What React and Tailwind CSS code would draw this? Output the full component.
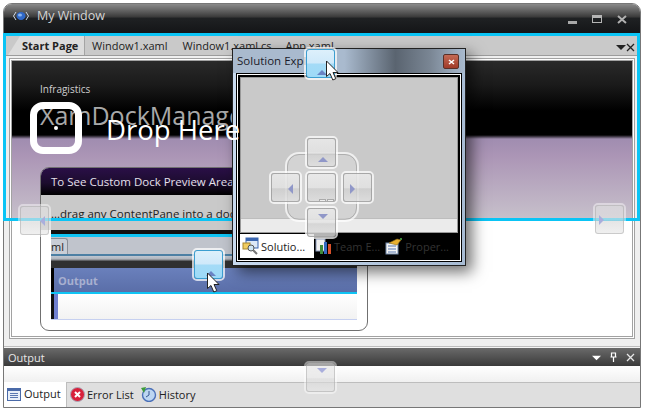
const font = { fontFamily: '"Open Sans","Noto Sans",sans-serif' };

function Cursor({ className }) {
  return (
    <svg className={className} width="15" height="22" viewBox="0 0 15 22">
      <path d="M1.5 1 L1.5 16.5 L5 13.5 L7.8 20 L10.8 18.7 L8 12.5 L13 12.5 Z" fill="#fff" stroke="#222" strokeWidth="1" />
    </svg>
  );
}

function Tri({ dir, color = "#8f94c4", size = 10 }) {
  const pts = { up: "0,8 5,3 10,8", down: "0,3 5,8 10,3", left: "7,0 7,10 2,5", right: "3,0 3,10 8,5" }[dir];
  return (
    <svg width={size} height={size} viewBox="0 0 10 10"><polygon points={pts} fill={color} /></svg>
  );
}

function DockBtn({ className = "", dir, active = false, faint = false, triClass = "" }) {
  const face = active
    ? "border-[#3c9ed0] bg-[linear-gradient(#ddf0fb_0%,#cfe9fa_48%,#a4dbf7_52%,#9ddaf7_100%)]"
    : faint
      ? "border-[#a8a8a880] bg-[linear-gradient(#e4e4e4a0_0%,#e4e4e4a0_50%,#d6d6d6a0_55%,#e6e6e6a0_100%)]"
      : "border-[#9a9a9acc] bg-[linear-gradient(#e9e9e9e0_0%,#e2e2e2e0_50%,#d0d0d0d0_55%,#e0e0e0d0_100%)]";
  return (
    <div className={`absolute w-[33px] h-[33px] rounded-[5px] border-2 ${faint ? "border-[#ffffff70]" : "border-[#ffffffb8]"} ${className}`}>
      <div className={`relative w-full h-full rounded-[3px] border ${face}`}>
        <div className={`absolute flex ${triClass}`}>
          <Tri dir={dir} color={active ? "#6a83c4" : faint ? "#a9aedc" : "#9097c8"} />
        </div>
      </div>
    </div>
  );
}

function SolIcon() {
  return (
    <svg width="18" height="18" viewBox="0 0 18 18" className="shrink-0">
      <rect x="4" y="1" width="12" height="10" fill="#dce8f6" stroke="#3a66b0" />
      <rect x="4" y="1" width="12" height="3" fill="#3a66b0" />
      <rect x="1" y="6" width="7" height="6" fill="#f0cc60" stroke="#a8862a" />
      <circle cx="9" cy="11" r="3" fill="#cfe6f5" stroke="#555" />
      <line x1="11" y1="13" x2="15" y2="17" stroke="#777" strokeWidth="2" />
    </svg>
  );
}

function TeamIcon() {
  return (
    <svg width="18" height="17" viewBox="0 0 18 17" className="shrink-0">
      <rect x="1" y="1" width="9" height="12" fill="#f0f0f0" stroke="#8898b8" />
      <rect x="5" y="7" width="3" height="9" fill="#3d8a3a" />
      <rect x="9" y="4" width="3" height="12" fill="#3468c0" />
      <rect x="13" y="6" width="3" height="10" fill="#d8502a" />
    </svg>
  );
}

function PropIcon() {
  return (
    <svg width="18" height="17" viewBox="0 0 18 17" className="shrink-0">
      <rect x="1" y="5" width="12" height="11" fill="#f4f4f4" stroke="#7088aa" />
      <path d="M3 8h8M3 11h8M3 14h8" stroke="#5878b0" />
      <path d="M4 5 L12 1 L16 2 L12 7 Z" fill="#e8b030" stroke="#8a6a18" strokeWidth="0.6" />
      <rect x="15" y="0" width="2" height="2" fill="#3d8a3a" />
    </svg>
  );
}

function OutputIcon() {
  return (
    <svg width="14" height="13" viewBox="0 0 14 13" className="shrink-0">
      <rect x="0.5" y="0.5" width="13" height="12" fill="#e8eff8" stroke="#4a6aa8" />
      <rect x="0.5" y="0.5" width="13" height="2.5" fill="#4a6aa8" />
      <path d="M3 5.5h8M3 7.5h8M3 9.5h8" stroke="#5a78b0" />
    </svg>
  );
}

function ErrIcon() {
  return (
    <svg width="15" height="15" viewBox="0 0 15 15" className="shrink-0">
      <circle cx="7.5" cy="7.5" r="7" fill="#d8203a" stroke="#a8a8b8" />
      <path d="M5 5l5 5M10 5l-5 5" stroke="#fff" strokeWidth="2" />
    </svg>
  );
}

function HistIcon() {
  return (
    <svg width="17" height="16" viewBox="0 0 17 16" className="shrink-0">
      <circle cx="9" cy="9" r="6.5" fill="#bcd6f2" stroke="#4a70b8" strokeWidth="1.4" />
      <path d="M9 5v4l-3 2" stroke="#35558f" fill="none" />
      <path d="M1 2 L6 1 L4 7 Z" fill="#3f9c3a" />
    </svg>
  );
}

export default function App() {
  return (
    <div className="relative w-[645px] h-[412px] overflow-hidden bg-white text-[11px] leading-none pl-[3px] pt-[3px]" style={font}>
      <div className="w-[638px] h-[405px] flex flex-col rounded-t-[9px] overflow-hidden border border-[#777] bg-[#f4f4f4]">
        {/* title bar */}
        <div className="h-[30px] shrink-0 flex items-center pl-[9px] pr-[13px] pb-[6px] bg-[linear-gradient(#8a8a8a_0%,#666_20%,#3c3c3c_42%,#1f2123_48%,#131416_100%)]">
          <svg width="16" height="12" viewBox="0 0 16 12" className="shrink-0">
            <path d="M3 2 L0.5 6 L3 10" stroke="#cfd8e6" fill="none" strokeWidth="1" />
            <path d="M13 2 L15.5 6 L13 10" stroke="#cfd8e6" fill="none" strokeWidth="1" />
            <ellipse cx="8" cy="6" rx="4.5" ry="4" fill="#2f68c8" />
            <ellipse cx="7" cy="5" rx="2" ry="1.5" fill="#8ab4ee" />
          </svg>
          <span className="ml-[8px] text-[12.5px] text-[#d4d4d4]">My Window</span>
          <div className="ml-auto flex items-center gap-[15px] mt-[6px]">
            <div className="w-[9px] h-[3px] mt-[7px] bg-[#a9a9a9]" />
            <div className="w-[10px] h-[8px] border border-t-[3px] border-[#b5b5b5]" />
            <svg width="10" height="9" viewBox="0 0 10 9"><path d="M1 1l8 7M9 1L1 8" stroke="#b0b0b0" strokeWidth="2" /></svg>
          </div>
        </div>

        {/* document area */}
        <div className="h-[313px] shrink-0 flex flex-col px-[5px] pb-[7px] bg-[#efefef] border-b border-[#bdbdbd]">
          <div className="h-[20px] shrink-0 -mx-[5px] mt-[2px] flex items-end pl-[4px] pr-[5px] bg-[#c9c9c9] border-b border-[#9c9c9c] text-[#222]">
            <div className="h-[19px] w-[77px] pl-[14px] flex items-center font-bold bg-[#dcdcdc] border-r border-[#a4a4a4] [clip-path:polygon(12px_0,100%_0,100%_100%,0_100%)]">Start Page</div>
            <div className="h-[19px] flex items-center ml-[7px]">Window1.xaml</div>
            <div className="h-[19px] flex items-center ml-[15px]">Window1.xaml.cs</div>
            <div className="h-[19px] flex items-center ml-[14px]">App.xaml</div>
            <div className="ml-auto flex items-center pb-[3px]">
              <Tri dir="down" color="#222" size={10} />
              <svg width="9" height="9" viewBox="0 0 9 9"><path d="M1 1l7 7M8 1L1 8" stroke="#222" strokeWidth="1.3" /></svg>
            </div>
          </div>
          <div className="flex-1 mt-[2px] border border-[#a2a2a2] p-[1px] bg-white">
            <div className="h-full border border-[#a2a2a2] pl-[28px] pt-[21px] bg-[linear-gradient(#2a2a2a_0px,#1a1a1a_24px,#000_50px,#000_74px,#a08db0_78px,#ac96b6_96px,#c8c2cc_160px,#fff_160px)]">
              <div className="text-[10px] text-[#cfcfcf] leading-[14px]">Infragistics</div>
              <div className="mt-[3px] text-[25px] leading-[32px] text-[#a8a8a8] whitespace-nowrap">XamDockManager</div>
              <div className="mt-[36px] w-[328px] h-[164px] rounded-[9px] border border-[#707070] bg-white overflow-hidden">
                <div className="h-[27px] pl-[10px] flex items-center text-[11.5px] text-[#e4e0ea] bg-[linear-gradient(#2a0f47_0%,#1c0c2e_55%,#000_100%)] whitespace-nowrap">To See Custom Dock Preview Areas</div>
                <div className="h-[35px] pl-[10px] pt-[13px] text-[11.5px] bg-[#c9c9c9] text-[#222] whitespace-nowrap">...drag any ContentPane into a document</div>
                <div className="mx-[10px] flex flex-col">
                  <div className="h-[7px] bg-[linear-gradient(#111_0%,#111_57%,#0fc4f4_57%,#0fc4f4_100%)]" />
                  <div className="h-[17px] bg-[#c0c4cc] flex items-end">
                    <div className="h-[16px] w-[17px] border border-b-0 border-l-0 border-[#8a8f98] rounded-tr-[3px] bg-[#c9ced6] text-[11px] text-[#222] flex items-center">ml</div>
                  </div>
                  <div className="h-[2px] bg-[#4d80a4]" />
                  <div className="h-[12px] bg-[linear-gradient(#c0c8d2_0%,#b0b4bc_25%,#303030_45%,#303030_100%)]" />
                  <div className="h-[24px] bg-[#000] pl-[3px]">
                    <div className="h-full pl-[4px] flex items-center font-bold text-[11px] text-[#a8b0d0] bg-[linear-gradient(#6a80bc,#5a6ea8)]">Output</div>
                  </div>
                  <div className="h-[2px] bg-[#0fc4f4]" />
                  <div className="h-[26px] bg-[#fafafa] border-b border-[#c6d0f0] flex">
                    <div className="w-[7px] bg-[linear-gradient(90deg,#111_0_3px,#7080d0_3px)]" />
                    <div className="flex-1 bg-[linear-gradient(#fff,#f2f2f2)]" />
                  </div>
                </div>
              </div>
            </div>
          </div>
        </div>

        {/* output pane */}
        <div className="h-[18px] mt-[1px] shrink-0 flex items-center pl-[4px] pr-[5px] bg-[linear-gradient(#6a6a6a,#3a3a3a)] text-[#e8e8e8]">
          Output
          <div className="ml-auto flex items-center gap-[9px]">
            <Tri dir="down" color="#fff" size={9} />
            <svg width="7" height="10" viewBox="0 0 7 10"><path d="M1.5 1h4v4h-4zM0.5 5h6M3.5 5v5" stroke="#fff" fill="none" strokeWidth="1.2" /></svg>
            <svg width="9" height="9" viewBox="0 0 9 9"><path d="M1 1l7 7M8 1L1 8" stroke="#e8e8e8" strokeWidth="1.3" /></svg>
          </div>
        </div>
        <div className="h-[17px] shrink-0 bg-[linear-gradient(#fff,#f0f0f0)] border-b border-[#bdbdbd]" />
        <div className="flex-1 flex items-stretch bg-[#dfdfdf] text-[#222]">
          <div className="w-[63px] -mt-px pl-[3px] pt-[3px] flex items-start gap-[3px] bg-white border-r border-[#bdbdbd]">
            <div className="pt-[3px]"><OutputIcon /></div>
            <span className="pt-[3px]">Output</span>
          </div>
          <div className="ml-[3px] flex items-center gap-[2px] pb-[2px]"><ErrIcon /><span>Error List</span></div>
          <div className="ml-[6px] flex items-center gap-[2px] pb-[2px]"><HistIcon /><span>History</span></div>
        </div>
      </div>

      {/* dock preview */}
      <div className="absolute left-[3px] top-[33px] w-[637px] h-[188px] border-[3px] border-[#0ac4f5] pointer-events-none" />

      {/* floating window */}
      <div className="absolute left-[232px] top-[48px] w-[234px] h-[218px] border border-[#222] flex flex-col px-[3px] pb-[3px] shadow-[6px_6px_14px_#00000090] bg-[linear-gradient(90deg,#c8daef,#a8bcd4)]">
        <div className="h-[24px] shrink-0 flex items-center text-[11.5px] text-[#1c1c2a] bg-[linear-gradient(90deg,#a9bace_0%,#a9bace_48%,#5a6470_70%,#7a8694_85%,#a9bace_100%)] -mx-[3px] pl-[4px] pr-[6px]">
          Solution Explorer
          <div className="ml-auto w-[16px] h-[15px] mt-[1px] rounded-[2px] border border-[#5a3028] bg-[linear-gradient(#c46a55,#a03a28)] flex items-center justify-center">
            <svg width="7" height="6" viewBox="0 0 7 6"><path d="M1 1l5 4M6 1L1 5" stroke="#fff" strokeWidth="1.5" /></svg>
          </div>
        </div>
        <div className="flex-1 border border-black bg-white p-[1px] flex flex-col">
          <div className="flex-1 flex flex-col border border-black bg-[#000] p-[1px]">
            <div className="flex-1 flex flex-col border border-[#999] bg-[#c9c9c9]">
              <div className="flex-1" />
              <div className="h-[14px] bg-[#ebebeb] border-t border-[#bdbdbd]" />
            </div>
            <div className="h-[24px] shrink-0 flex items-stretch bg-black mt-px text-[#333]">
              <div className="w-[74px] bg-white flex items-center gap-[1px] pl-[2px] text-[#222]"><SolIcon /><span>Solutio...</span></div>
              <div className="ml-[1px] flex items-center gap-[1px]"><TeamIcon /><span>Team E...</span></div>
              <div className="ml-[5px] flex items-center gap-[2px]"><PropIcon /><span>Proper...</span></div>
            </div>
          </div>
        </div>
      </div>

      {/* drop here hint */}
      <div className="absolute left-[30px] top-[102px] w-[52px] h-[52px] rounded-[13px] border-[7px] border-white flex items-center justify-center">
        <div className="w-[4px] h-[4px] rounded-full bg-white" />
      </div>
      <div className="absolute left-[106px] top-[112px] text-[27.5px] leading-[36px] text-white whitespace-nowrap">Drop Here</div>

      {/* center drop compass */}
      <div className="absolute left-[285px] top-[152px] w-[74px] h-[70px] rounded-[14px] border-2 border-[#ffffffa0] bg-[#ffffff30]">
        <div className="w-full h-full rounded-[12px] border border-[#8a8a8a80]" />
      </div>
      <DockBtn className="left-[305px] top-[136px]" dir="up" triClass="left-[10px] bottom-[2px]" />
      <DockBtn className="left-[305px] top-[206px]" dir="down" triClass="left-[10px] top-[2px]" />
      <DockBtn className="left-[269px] top-[171px]" dir="left" triClass="right-[3px] top-[10px]" />
      <DockBtn className="left-[341px] top-[171px]" dir="right" triClass="left-[3px] top-[10px]" />
      <div className="absolute left-[305px] top-[171px] w-[33px] h-[33px] rounded-[5px] border-2 border-[#ffffffb8]">
        <div className="relative w-full h-full rounded-[3px] border border-[#9a9a9acc] bg-[linear-gradient(#e9e9e9_0%,#e2e2e2_50%,#d0d0d0_55%,#dcdcdc_100%)]">
          <div className="absolute right-[1px] bottom-[-1px] w-[7px] h-[3px] border border-[#aaa] bg-[#eee]" />
          <div className="absolute right-[9px] bottom-[-1px] w-[7px] h-[3px] border border-[#aaa] bg-[#eee]" />
        </div>
      </div>

      {/* edge drop buttons */}
      <DockBtn className="left-[18px] top-[204px]" dir="left" faint triClass="right-[0px] top-[9px]" />
      <DockBtn className="left-[593px] top-[203px]" dir="right" faint triClass="left-[0px] top-[9px]" />
      <DockBtn className="left-[304px] top-[361px]" dir="down" faint triClass="left-[10px] top-[1px]" />

      {/* active drop buttons */}
      <DockBtn className="left-[304px] top-[47px]" dir="up" active triClass="left-[10px] bottom-[0px]" />
      <Cursor className="absolute left-[325px] top-[60px]" />
      <DockBtn className="left-[192px] top-[248px]" dir="up" active triClass="left-[11px] bottom-[0px]" />
      <Cursor className="absolute left-[206px] top-[272px]" />
    </div>
  );
}
